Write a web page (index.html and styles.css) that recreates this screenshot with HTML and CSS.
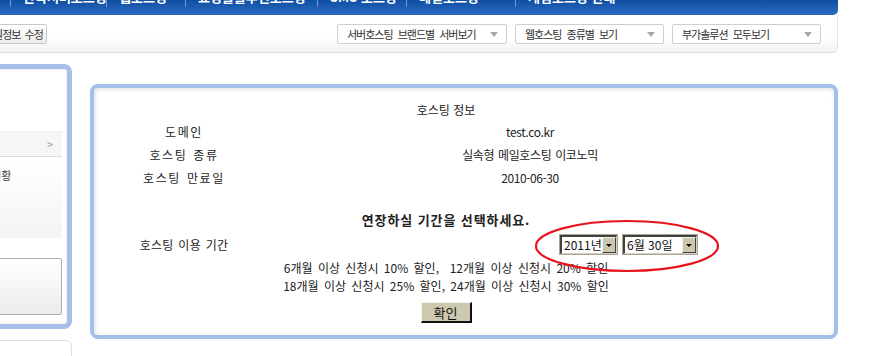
FILE: index.html
```html
<!DOCTYPE html>
<html lang="ko">
<head>
<meta charset="utf-8">
<link rel="stylesheet" href="styles.css">
</head>
<body>
<div class="topbar">
  <ul class="gnb">
    <li class="gnb-item w1">단독서버호스팅</li>
    <li class="gnb-item w2">웹호스팅</li>
    <li class="gnb-item w3">쇼핑몰솔루션호스팅</li>
    <li class="gnb-item w4">SMS 호스팅</li>
    <li class="gnb-item w5">메일호스팅</li>
    <li class="gnb-item w6">게임호스팅 안내</li>
  </ul>
</div>
<div class="toolbar">
  <button class="tool-btn">회원정보 수정</button>
  <div class="tool-selects">
    <div class="drop d1"><span>서버호스팅 브랜드별 서버보기</span><i class="caret"></i></div>
    <div class="drop d2"><span>웹호스팅 종류별 보기</span><i class="caret"></i></div>
    <div class="drop d3"><span>부가솔루션 모두보기</span><i class="caret"></i></div>
  </div>
</div>
<div class="content">
  <aside class="side">
    <div class="side-panel">
      <div class="side-top"></div>
      <div class="side-row"><span class="chev">&gt;</span></div>
      <div class="side-fade"><span class="side-text">이용현황</span></div>
      <div class="side-box"></div>
    </div>
    <div class="side-lower"></div>
  </aside>
  <section class="panel">
    <div class="panel-inner">
      <div class="title">호스팅 정보</div>
      <div class="info">
        <div class="lbl">도메인</div><div class="val">test.co.kr</div>
        <div class="lbl">호스팅 종류</div><div class="val">실속형 메일호스팅 이코노믹</div>
        <div class="lbl">호스팅 만료일</div><div class="val">2010-06-30</div>
      </div>
      <div class="headline">연장하실 기간을 선택하세요.</div>
      <div class="info period">
        <div class="lbl plain">호스팅 이용 기간</div>
        <div class="pick">
          <div class="xp-select year"><span class="xp-val">2011년</span><span class="xp-arrow"></span></div>
          <div class="xp-select month"><span class="xp-val">6월 30일</span><span class="xp-arrow"></span></div>
        </div>
      </div>
      <div class="discount">
        <div>6개월 이상 신청시 10% 할인,&nbsp; 12개월 이상 신청시 20% 할인</div>
        <div>18개월 이상 신청시 25% 할인, 24개월 이상 신청시 30% 할인</div>
      </div>
      <div class="actions"><button class="ok-btn">확인</button></div>
    </div>
    <svg class="mark" width="188" height="56" viewBox="0 0 188 56"><ellipse cx="94" cy="28" rx="91" ry="25" fill="none" stroke="#e8141b" stroke-width="2.2"/></svg>
  </section>
</div>
</body>
</html>
```

FILE: styles.css
```css
* { box-sizing: border-box; }
html, body { margin: 0; padding: 0; background: #fff; }
body {
  width: 895px;
  height: 356px;
  overflow: hidden;
  font-family: "Noto Sans CJK KR", "Liberation Sans", sans-serif;
  font-size: 12px;
  color: #222;
}

/* top navigation bar (cut off at the top of the screenshot) */
.topbar {
  width: 838px;
  height: 15px;
  background: linear-gradient(#0f4fa3, #2c6bbf);
  border-bottom-right-radius: 5px;
  overflow: hidden;
}
.gnb {
  list-style: none;
  margin: -13px 0 0 0;
  padding: 0 0 0 10px;
  display: flex;
  color: #fff;
  font-size: 13px;
  font-weight: bold;
  line-height: 20px;
}
.gnb-item {
  border-left: 1px solid #6f9ad4;
  padding-left: 12px;
  white-space: nowrap;
  overflow: hidden;
}
.w1 { width: 96px; }
.w2 { width: 79px; }
.w3 { width: 132px; }
.w4 { width: 89px; }
.w5 { width: 109px; }
.w6 { width: 140px; }

/* toolbar */
.toolbar {
  width: 838px;
  height: 38px;
  background: linear-gradient(#fff 60%, #f3f3f3);
  border-bottom: 1px solid #dcdcdc;
  border-right: 1px solid #e2e2e2;
  border-bottom-right-radius: 6px;
  display: flex;
  align-items: center;
  justify-content: space-between;
  padding-right: 16px;
}
.tool-btn {
  margin-left: -22px;
  height: 20px;
  width: 69px;
  padding: 0 0 0 5px;
  border: 1px solid #c8c8c8;
  border-radius: 2px;
  background: linear-gradient(#fff, #ececec);
  font: 11px "Noto Sans CJK KR", sans-serif;
  letter-spacing: -1px;
  word-spacing: 2px;
  color: #333;
  text-align: left;
  white-space: nowrap;
  margin-top: 1px;
}
.tool-selects { display: flex; gap: 8px; margin-top: 1px; }
.drop {
  height: 20px;
  border: 1px solid #cfcfcf;
  border-radius: 2px;
  background: #fff;
  display: flex;
  align-items: center;
  justify-content: space-between;
  padding: 0 8px 0 9px;
  color: #333;
  font-size: 11px;
  letter-spacing: -1px;
  word-spacing: 3px;
  white-space: nowrap;
}
.d1 { width: 170px; }
.d2 { width: 149px; }
.d3 { width: 149px; }
.caret {
  width: 0; height: 0;
  border-left: 4px solid transparent;
  border-right: 4px solid transparent;
  border-top: 5px solid #a8a8a8;
}

/* content */
.content { display: flex; align-items: flex-start; }

.side { margin-left: -20px; width: 92px; margin-top: 11px; }
.side-panel {
  height: 265px;
  border: 5px solid #a6c0ea;
  border-radius: 8px;
  background: #fff;
  box-shadow: inset 0 0 3px rgba(0,0,0,.12);
  overflow: hidden;
}
.side-top { height: 62px; }
.side-row {
  height: 26px;
  width: 77px;
  background: #f6f6f6;
  border-bottom: 1px solid #dcdcdc;
  border-top: 1px solid #f0f0f0;
  display: flex;
  align-items: center;
  justify-content: flex-end;
  padding-right: 9px;
}
.chev { color: #9a9a9a; font-size: 11px; }
.side-fade {
  height: 81px;
  width: 77px;
  background: linear-gradient(#fff, #f4f4f4);
  padding-top: 10px;
  color: #444;
  font-size: 11px;
  white-space: nowrap;
}
.side-text { margin-left: -14px; }
.side-box {
  margin-top: 20px;
  height: 57px;
  width: 77px;
  border: 1px solid #b0b0b0;
  border-radius: 2px;
  background: linear-gradient(#fff, #ececec);
}
.side-lower {
  margin-top: 11px;
  height: 30px;
  width: 92px;
  border: 1px solid #e0e0e0;
  border-top-right-radius: 6px;
}

.panel {
  position: relative;
  margin-left: 18px;
  margin-top: 31px;
  width: 748px;
  height: 255px;
  border: 4px solid #a4bfe9;
  border-radius: 8px;
  background: #fff;
}
.panel-inner {
  height: 100%;
  border-radius: 5px;
  box-shadow: inset 1px 1px 4px rgba(0,0,0,.14);
  width: 740px;
}
.title {
  width: 704px;
  text-align: center;
  padding-top: 12px;
  line-height: 20px;
}
.info {
  display: grid;
  grid-template-columns: 178px 516px;
  grid-auto-rows: 23px;
  align-items: center;
}
.lbl, .val { text-align: center; white-space: nowrap; }
.lbl { letter-spacing: 1.6px; word-spacing: 1px; padding-left: 2px; }
.lbl.plain { letter-spacing: 0.3px; word-spacing: 1px; }
.val { letter-spacing: -0.4px; word-spacing: 1px; }
.headline {
  width: 704px;
  text-align: center;
  font-weight: bold;
  font-size: 13px;
  letter-spacing: 0.9px;
  margin-top: 22px;
  line-height: 18px;
}
.period { margin-top: 4px; }
.pick { display: flex; gap: 6px; padding-left: 288px; }
.xp-select {
  height: 19px;
  display: flex;
  background: #fff;
  border-top: 2px solid #404040;
  border-left: 2px solid #404040;
  border-right: 1px solid #d4d0c8;
  border-bottom: 1px solid #d4d0c8;
  box-shadow: 0 0 0 1px #a9a58f;
}
.year { width: 57px; }
.month { width: 74px; }
.xp-val { flex: 1; padding-left: 2px; line-height: 15px; font-size: 12px; white-space: nowrap; color: #111; }
.xp-arrow {
  width: 14px;
  background: #cbc6ad;
  border-top: 1px solid #f4f2e8;
  border-left: 1px solid #f4f2e8;
  border-right: 1px solid #404040;
  border-bottom: 1px solid #404040;
  position: relative;
}
.xp-arrow::after {
  content: "";
  position: absolute;
  left: 3px; top: 6px;
  border-left: 3px solid transparent;
  border-right: 3px solid transparent;
  border-top: 3px solid #000;
}
.discount {
  width: 704px;
  text-align: center;
  margin-top: 3px;
  line-height: 18px;
  white-space: nowrap;
  word-spacing: 2px;
}
.actions { width: 704px; display: flex; justify-content: center; margin-top: 7px; }
.ok-btn {
  width: 51px;
  height: 21px;
  padding: 0;
  background: #cdc8b0;
  border-top: 1px solid #f5f3ea;
  border-left: 1px solid #f5f3ea;
  border-right: 2px solid #111;
  border-bottom: 2px solid #111;
  font: 13px "Noto Sans CJK KR", sans-serif;
  color: #111;
}
.mark { position: absolute; left: 439px; top: 130px; }
```
